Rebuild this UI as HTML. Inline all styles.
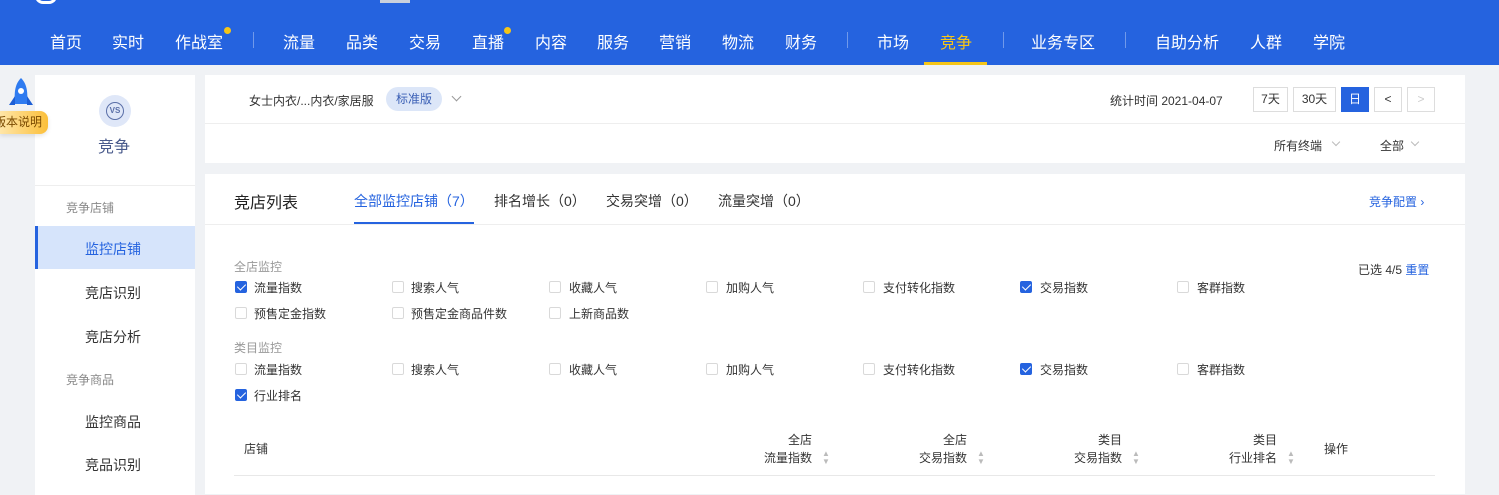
<!DOCTYPE html>
<html><head><meta charset="utf-8"><style>
*{margin:0;padding:0;box-sizing:border-box}
body{width:1499px;height:483px;overflow:hidden;background:#f0f2f5;font-family:"Liberation Sans","Noto Sans CJK SC",sans-serif;position:relative;color:#333}
.a{position:absolute;white-space:nowrap}
.hdr{position:absolute;left:0;top:0;width:1499px;height:65px;background:#2563df}
.nav{color:#fff;font-size:16px;top:29px}
.sep{position:absolute;top:32px;width:1px;height:16px;background:rgba(255,255,255,.35)}
.dot{position:absolute;width:7px;height:7px;border-radius:50%;background:#f5c518}
.card{position:absolute;background:#fff}
.side{font-size:14px;color:#333}
.sg{font-size:12px;color:#888}
.cb{position:absolute;width:12px;height:12px;border:1px solid #d9d9d9;border-radius:2px;background:#fff}
.cb.on{background:#2563df;border-color:#2563df}
.cb.on:after{content:"";position:absolute;left:3px;top:0px;width:4px;height:7px;border:solid #fff;border-width:0 1.5px 1.5px 0;transform:rotate(45deg)}
.cl{font-size:12px;color:#333}
.btn{position:absolute;top:87px;height:25px;border:1px solid #ddd;font-size:12px;color:#333;text-align:center;line-height:23px;background:#fff}
.th{font-size:12px;color:#333;text-align:right}
.sort{position:absolute;font-size:8px;color:#bbb;line-height:8px}
</style></head><body>
<div class="hdr"></div>
<div class="a" style="left:35px;top:-6px;width:22px;height:10px;border:3px solid #fff;border-top:none;border-radius:0 0 8px 8px"></div>
<div class="a" style="left:380px;top:-6px;width:30px;height:9px;background:#c9d0dc"></div>
<div class="a nav" style="left:50px">首页</div>
<div class="a nav" style="left:112px">实时</div>
<div class="a nav" style="left:175px">作战室</div><div class="dot" style="left:224px;top:27px"></div>
<div class="sep" style="left:253px"></div>
<div class="a nav" style="left:283px">流量</div>
<div class="a nav" style="left:346px">品类</div>
<div class="a nav" style="left:409px">交易</div>
<div class="a nav" style="left:472px">直播</div><div class="dot" style="left:504px;top:27px"></div>
<div class="a nav" style="left:535px">内容</div>
<div class="a nav" style="left:597px">服务</div>
<div class="a nav" style="left:659px">营销</div>
<div class="a nav" style="left:722px">物流</div>
<div class="a nav" style="left:785px">财务</div>
<div class="sep" style="left:847px"></div>
<div class="a nav" style="left:877px">市场</div>
<div class="a nav" style="left:940px;color:#f5c518">竞争</div>
<div class="a" style="left:924px;top:62px;width:63px;height:3px;background:#f5c518"></div>
<div class="sep" style="left:1003px"></div>
<div class="a nav" style="left:1031px">业务专区</div>
<div class="sep" style="left:1125px"></div>
<div class="a nav" style="left:1155px">自助分析</div>
<div class="a nav" style="left:1250px">人群</div>
<div class="a nav" style="left:1313px">学院</div>

<!-- sidebar -->
<div class="card" style="left:35px;top:75px;width:160px;height:420px"></div>
<div class="a" style="left:99px;top:95px;width:32px;height:32px;border-radius:50%;background:#dfe7f8"></div>
<div class="a" style="left:106px;top:102px;width:18px;height:18px;border-radius:50%;border:1.5px solid #5a6fa8;font-size:8px;color:#5a6fa8;text-align:center;line-height:15px;font-weight:bold">VS</div>
<div class="a" style="left:98px;top:133px;font-size:16px;color:#4a5b8c">竞争</div>
<div class="a" style="left:35px;top:185px;width:160px;height:1px;background:#eee"></div>
<div class="a sg" style="left:66px;top:199px">竞争店铺</div>
<div class="a" style="left:35px;top:226px;width:160px;height:43px;background:#d6e4fb"></div>
<div class="a" style="left:35px;top:226px;width:3px;height:43px;background:#2563df"></div>
<div class="a side" style="left:85px;top:239px;color:#2563df">监控店铺</div>
<div class="a side" style="left:85px;top:283px">竞店识别</div>
<div class="a side" style="left:85px;top:327px">竞店分析</div>
<div class="a sg" style="left:66px;top:371px">竞争商品</div>
<div class="a side" style="left:85px;top:412px">监控商品</div>
<div class="a side" style="left:85px;top:455px">竞品识别</div>

<!-- rocket -->
<svg class="a" style="left:7px;top:77px;z-index:2" width="28" height="36" viewBox="0 0 28 36"><path d="M14 1C8 7 7 15 8 27h12c1-12 0-20-6-26z" fill="#2f7bf0"/><path d="M8 19l-6 9 6 0zM20 19l6 9-6 0z" fill="#1d5fd6"/><circle cx="14" cy="14" r="3" fill="#fff"/></svg>
<div class="a" style="left:0;top:111px;width:48px;height:23px;background:linear-gradient(90deg,#ffe6a8,#fbbf3a);border-radius:0 8px 8px 0;font-size:12px;color:#7a4a00;line-height:23px;overflow:hidden;z-index:3;box-shadow:0 2px 4px rgba(0,0,0,.1)"><span style="position:absolute;right:6px">版本说明</span></div>

<!-- top card -->
<div class="card" style="left:205px;top:75px;width:1260px;height:88px"></div>
<div class="a" style="left:249px;top:92px;font-size:12px;color:#333">女士内衣/...内衣/家居服</div>
<div class="a" style="left:386px;top:87px;width:56px;height:24px;border-radius:12px;background:#dce6f8;font-size:12px;color:#3a5fb5;text-align:center;line-height:24px">标准版</div>
<div class="a" style="left:453px;top:93px;width:7px;height:7px;border-right:1px solid #999;border-bottom:1px solid #999;transform:rotate(45deg)"></div>
<div class="a" style="left:205px;top:123px;width:1260px;height:1px;background:#eee"></div>
<div class="a" style="left:1110px;top:92px;font-size:12px;color:#333">统计时间 2021-04-07</div>
<div class="btn" style="left:1253px;width:35px">7天</div>
<div class="btn" style="left:1293px;width:43px">30天</div>
<div class="btn" style="left:1341px;width:28px;background:#2563df;border-color:#2563df;color:#fff">日</div>
<div class="btn" style="left:1374px;width:28px">&lt;</div>
<div class="btn" style="left:1407px;width:28px;color:#ccc">&gt;</div>
<div class="a" style="left:1274px;top:137px;font-size:12px">所有终端</div>
<div class="a" style="left:1333px;top:139px;width:6px;height:6px;border-right:1px solid #bbb;border-bottom:1px solid #bbb;transform:rotate(45deg)"></div>
<div class="a" style="left:1380px;top:137px;font-size:12px">全部</div>
<div class="a" style="left:1412px;top:139px;width:6px;height:6px;border-right:1px solid #bbb;border-bottom:1px solid #bbb;transform:rotate(45deg)"></div>

<!-- main card -->
<div class="card" style="left:205px;top:174px;width:1260px;height:320px"></div>
<div class="a" style="left:234px;top:189px;font-size:16px;color:#222">竞店列表</div>
<div class="a" style="left:354px;top:191px;font-size:14px;color:#2563df">全部监控店铺（7）</div>
<div class="a" style="left:354px;top:222px;width:120px;height:2px;background:#2563df"></div>
<div class="a" style="left:494px;top:191px;font-size:14px">排名增长（0）</div>
<div class="a" style="left:606px;top:191px;font-size:14px">交易突增（0）</div>
<div class="a" style="left:718px;top:191px;font-size:14px">流量突增（0）</div>
<div class="a" style="left:1369px;top:193px;font-size:12px;color:#2563df">竞争配置 ›</div>
<div class="a" style="left:205px;top:224px;width:1260px;height:1px;background:#eee"></div>
<div class="a" style="left:234px;top:258px;font-size:12px;color:#999">全店监控</div>
<div class="a" style="left:1358px;top:261px;font-size:12px">已选 4/5 <span style="color:#2563df">重置</span></div>
<div class="a" style="left:234px;top:339px;font-size:12px;color:#999">类目监控</div>

<div class="cb on" style="left:235px;top:281px"></div><div class="a cl" style="left:254px;top:279px">流量指数</div>
<div class="cb" style="left:392px;top:281px"></div><div class="a cl" style="left:411px;top:279px">搜索人气</div>
<div class="cb" style="left:549px;top:281px"></div><div class="a cl" style="left:569px;top:279px">收藏人气</div>
<div class="cb" style="left:706px;top:281px"></div><div class="a cl" style="left:726px;top:279px">加购人气</div>
<div class="cb" style="left:863px;top:281px"></div><div class="a cl" style="left:883px;top:279px">支付转化指数</div>
<div class="cb on" style="left:1020px;top:281px"></div><div class="a cl" style="left:1040px;top:279px">交易指数</div>
<div class="cb" style="left:1177px;top:281px"></div><div class="a cl" style="left:1197px;top:279px">客群指数</div>
<div class="cb" style="left:235px;top:307px"></div><div class="a cl" style="left:254px;top:305px">预售定金指数</div>
<div class="cb" style="left:392px;top:307px"></div><div class="a cl" style="left:411px;top:305px">预售定金商品件数</div>
<div class="cb" style="left:549px;top:307px"></div><div class="a cl" style="left:569px;top:305px">上新商品数</div>

<div class="cb" style="left:235px;top:363px"></div><div class="a cl" style="left:254px;top:361px">流量指数</div>
<div class="cb" style="left:392px;top:363px"></div><div class="a cl" style="left:411px;top:361px">搜索人气</div>
<div class="cb" style="left:549px;top:363px"></div><div class="a cl" style="left:569px;top:361px">收藏人气</div>
<div class="cb" style="left:706px;top:363px"></div><div class="a cl" style="left:726px;top:361px">加购人气</div>
<div class="cb" style="left:863px;top:363px"></div><div class="a cl" style="left:883px;top:361px">支付转化指数</div>
<div class="cb on" style="left:1020px;top:363px"></div><div class="a cl" style="left:1040px;top:361px">交易指数</div>
<div class="cb" style="left:1177px;top:363px"></div><div class="a cl" style="left:1197px;top:361px">客群指数</div>
<div class="cb on" style="left:235px;top:389px"></div><div class="a cl" style="left:254px;top:387px">行业排名</div>

<div class="a th" style="left:244px;top:440px">店铺</div>
<div class="a th" style="left:762px;top:431px;width:50px;line-height:18px">全店<br>流量指数</div>
<div class="a th" style="left:917px;top:431px;width:50px;line-height:18px">全店<br>交易指数</div>
<div class="a th" style="left:1072px;top:431px;width:50px;line-height:18px">类目<br>交易指数</div>
<div class="a th" style="left:1227px;top:431px;width:50px;line-height:18px">类目<br>行业排名</div>
<div class="sort" style="left:822px;top:450px">▲<br>▼</div>
<div class="sort" style="left:977px;top:450px">▲<br>▼</div>
<div class="sort" style="left:1132px;top:450px">▲<br>▼</div>
<div class="sort" style="left:1287px;top:450px">▲<br>▼</div>
<div class="a th" style="left:1324px;top:440px">操作</div>
<div class="a" style="left:234px;top:475px;width:1201px;height:1px;background:#e8e8e8"></div>
</body></html>
